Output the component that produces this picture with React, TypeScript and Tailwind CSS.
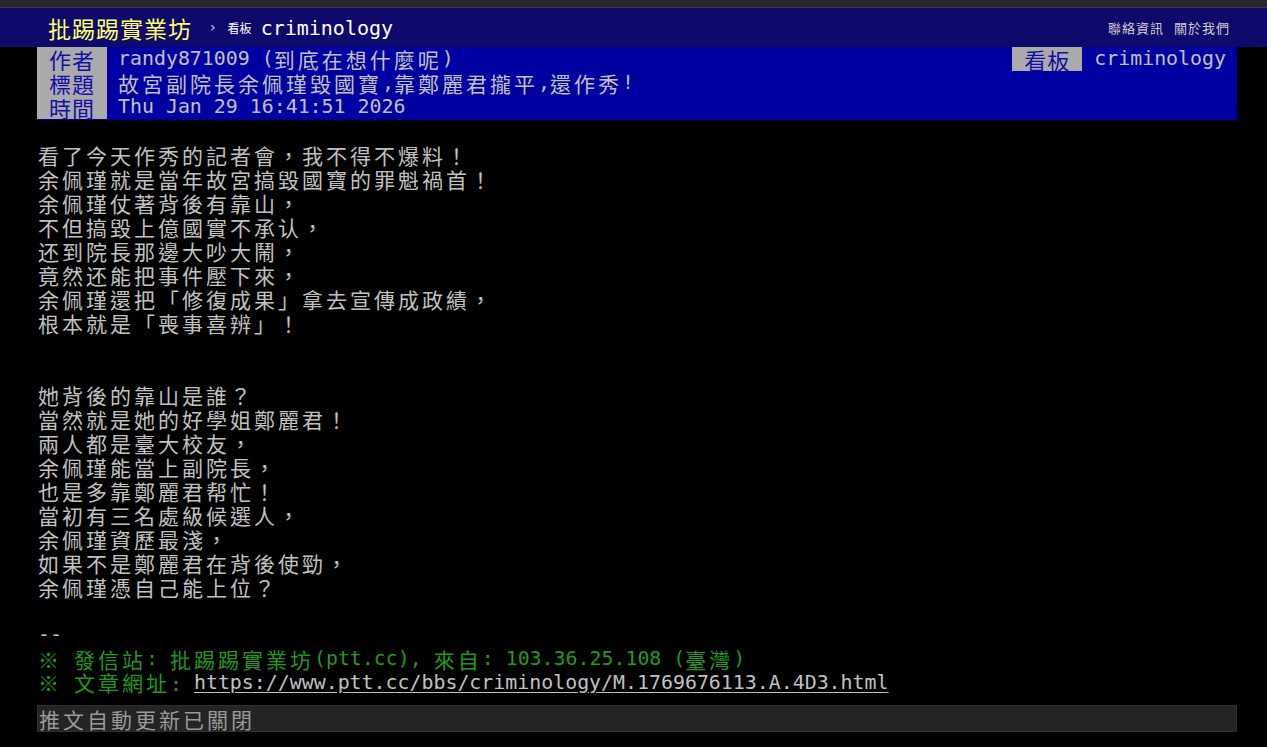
import { clsx } from "clsx";

// CJK runs get their own font so each glyph takes two columns (24px), as on the BBS screen
const CJK = /([\u203B\u2E80-\u9FFF\uF900-\uFAFF\uFE30-\uFE4F\uFF00-\uFF60]+)/;

function Txt({ s }: { s: string }) {
  return (
    <>
      {s.split(CJK).map((part, i) =>
        part === "" ? null : CJK.test(part) ? (
          <span
            key={i}
            className="font-['Noto_Sans_CJK_TC',sans-serif] text-[21px] leading-[24px] tracking-[3px]"
          >
            {part}
          </span>
        ) : (
          <span key={i} className="font-['DejaVu_Sans_Mono',monospace] text-[19.9px] leading-[24px]">
            {part}
          </span>
        )
      )}
    </>
  );
}

function Line({ s, className }: { s: string; className?: string }) {
  return (
    <div className={clsx("flex h-[24px] items-center whitespace-pre", className)}>
      <Txt s={s} />
    </div>
  );
}

function MetaTag({ label }: { label: string }) {
  return (
    <div className="flex h-[24px] w-[70px] shrink-0 items-center justify-center bg-[#aaaaaa] text-[#1010a8]">
      <span className="font-['Noto_Sans_CJK_TC',sans-serif] text-[22px] leading-[24px] tracking-[1px]">
        {label}
      </span>
    </div>
  );
}

const body = [
  "看了今天作秀的記者會，我不得不爆料！",
  "余佩瑾就是當年故宮搞毀國寶的罪魁禍首！",
  "余佩瑾仗著背後有靠山，",
  "不但搞毀上億國實不承认，",
  "还到院長那邊大吵大鬧，",
  "竟然还能把事件壓下來，",
  "余佩瑾還把「修復成果」拿去宣傳成政績，",
  "根本就是「喪事喜辨」！",
  "",
  "",
  "她背後的靠山是誰？",
  "當然就是她的好學姐鄭麗君！",
  "兩人都是臺大校友，",
  "余佩瑾能當上副院長，",
  "也是多靠鄭麗君帮忙！",
  "當初有三名處級候選人，",
  "余佩瑾資歷最淺，",
  "如果不是鄭麗君在背後使勁，",
  "余佩瑾憑自己能上位？",
  "",
];

export default function App() {
  return (
    <div className="min-h-[747px] bg-black text-[#c0c0c0]">
      <div className="h-[8px] border-b border-[#3a393f] bg-[#28272c]" />
      <div className="flex h-[39px] items-center bg-[#0e0a6c] pl-[48px] pr-[37px]">
        <span className="font-['Noto_Sans_CJK_TC',sans-serif] text-[23px] leading-[28px] tracking-[1px] text-[#ffff66]">
          批踢踢實業坊
        </span>
        <span className="ml-[18px] font-['DejaVu_Sans',sans-serif] text-[14px] text-[#cccccc]">›</span>
        <span className="ml-[12px] font-['Noto_Sans_CJK_TC',sans-serif] text-[12px] text-white">看板</span>
        <span className="ml-[9px] font-['DejaVu_Sans_Mono',monospace] text-[20px] text-white">criminology</span>
        <div className="ml-auto flex gap-[10px] font-['Noto_Sans_CJK_TC',sans-serif] text-[13px] tracking-[1px] text-[#cccccc]">
          <span>聯絡資訊</span>
          <span>關於我們</span>
        </div>
      </div>

      <div className="ml-[37px] w-[1200px]">
        <div className="bg-[#0000a2] pb-[1px]">
          <div className="flex h-[24px] items-center">
            <MetaTag label="作者" />
            <div className="ml-[11px] flex items-center whitespace-pre">
              <Txt s="randy871009 (到底在想什麼呢)" />
            </div>
            <div className="ml-auto flex items-center">
              <MetaTag label="看板" />
              <div className="ml-[12px] mr-[11px] flex items-center whitespace-pre">
                <Txt s="criminology" />
              </div>
            </div>
          </div>
          <div className="flex h-[24px] items-center">
            <MetaTag label="標題" />
            <div className="ml-[11px] flex items-center whitespace-pre">
              <Txt s="故宮副院長余佩瑾毀國寶,靠鄭麗君攏平,還作秀!" />
            </div>
          </div>
          <div className="flex h-[24px] items-center">
            <MetaTag label="時間" />
            <div className="ml-[11px] flex items-center whitespace-pre">
              <Txt s="Thu Jan 29 16:41:51 2026" />
            </div>
          </div>
        </div>

        <div className="mt-[23px] pl-[1px]">
          {body.map((s, i) => (
            <Line key={i} s={s} />
          ))}
          <Line s="--" />
          <Line s="※ 發信站: 批踢踢實業坊(ptt.cc), 來自: 103.36.25.108 (臺灣)" className="text-[#1f9a1f]" />
          <div className="flex h-[24px] items-center whitespace-pre">
            <span className="text-[#1f9a1f]">
              <Txt s="※ 文章網址: " />
            </span>
            <span className="font-['DejaVu_Sans_Mono',monospace] text-[19.9px] leading-[24px] underline underline-offset-[3px]">
              https://www.ptt.cc/bbs/criminology/M.1769676113.A.4D3.html
            </span>
          </div>
        </div>

        <div className="mt-[10px] flex h-[27px] items-center border border-[#2e2e2e] bg-[#242424] pl-[1px] text-[#9a9a9a]">
          <Txt s="推文自動更新已關閉" />
        </div>
      </div>
    </div>
  );
}
